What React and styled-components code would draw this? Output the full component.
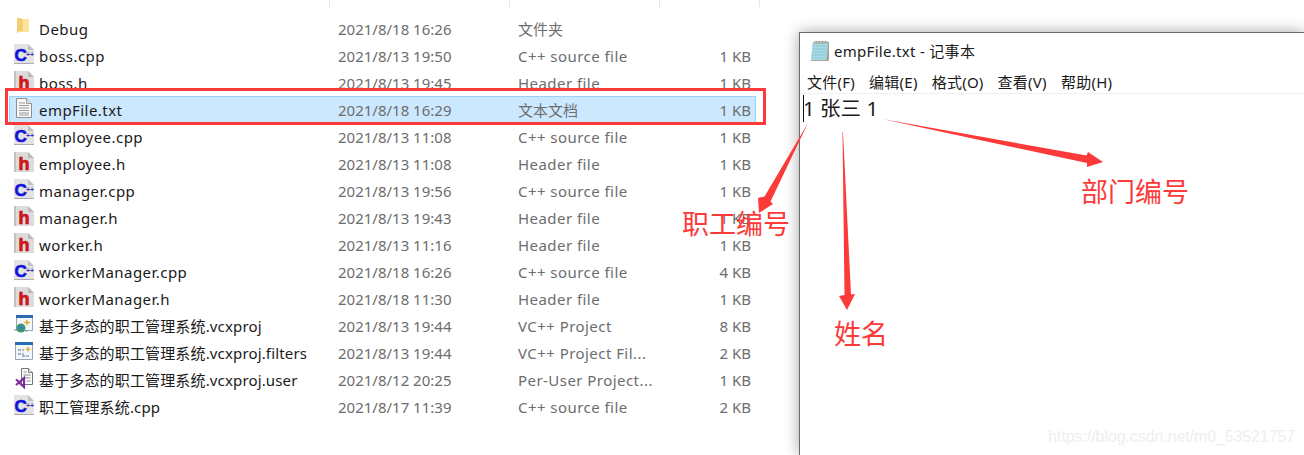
import React from "react"
import styled, { createGlobalStyle } from "styled-components"

const UI_FONT = `"Noto Sans", "Noto Sans CJK SC", sans-serif`
const LABEL_FONT = `"Noto Sans CJK SC", sans-serif`

const files = [
  { icon: "folder", name: "Debug", date: "2021/8/18 16:26", type: "文件夹", size: "" },
  { icon: "cpp", name: "boss.cpp", date: "2021/8/13 19:50", type: "C++ source file", size: "1 KB" },
  { icon: "h", name: "boss.h", date: "2021/8/13 19:45", type: "Header file", size: "1 KB" },
  { icon: "txt", name: "empFile.txt", date: "2021/8/18 16:29", type: "文本文档", size: "1 KB", selected: true },
  { icon: "cpp", name: "employee.cpp", date: "2021/8/13 11:08", type: "C++ source file", size: "1 KB" },
  { icon: "h", name: "employee.h", date: "2021/8/13 11:08", type: "Header file", size: "1 KB" },
  { icon: "cpp", name: "manager.cpp", date: "2021/8/13 19:56", type: "C++ source file", size: "1 KB" },
  { icon: "h", name: "manager.h", date: "2021/8/13 19:43", type: "Header file", size: "1 KB" },
  { icon: "h", name: "worker.h", date: "2021/8/13 11:16", type: "Header file", size: "1 KB" },
  { icon: "cpp", name: "workerManager.cpp", date: "2021/8/18 16:26", type: "C++ source file", size: "4 KB" },
  { icon: "h", name: "workerManager.h", date: "2021/8/18 11:30", type: "Header file", size: "1 KB" },
  { icon: "proj", name: "基于多态的职工管理系统.vcxproj", date: "2021/8/13 19:44", type: "VC++ Project", size: "8 KB" },
  { icon: "filters", name: "基于多态的职工管理系统.vcxproj.filters", date: "2021/8/13 19:44", type: "VC++ Project Fil...", size: "2 KB" },
  { icon: "user", name: "基于多态的职工管理系统.vcxproj.user", date: "2021/8/12 20:25", type: "Per-User Project...", size: "1 KB" },
  { icon: "cpp", name: "职工管理系统.cpp", date: "2021/8/17 11:39", type: "C++ source file", size: "2 KB" },
]

const menus = ["文件(F)", "编辑(E)", "格式(O)", "查看(V)", "帮助(H)"]

const hasCjk = (text) => /[\u4e00-\u9fff]/.test(text)

const FolderIcon = () => (
  <svg width="20" height="20" viewBox="0 0 20 20">
    <path d="M3 1h4l1 1v12l-5 2z" fill="#f3cf6f" />
    <path d="M8 2h7v13H3l5-1z" fill="#fde49a" />
    <path d="M8 2v12" stroke="#e8c465" />
  </svg>
)

const CppIcon = () => (
  <svg width="20" height="20" viewBox="0 0 20 20">
    <path d="M0 0h14l6 6v14H0z" fill="#e4e2e2" />
    <path d="M14 0v6h6z" fill="#c2c0c0" />
    <path d="M0 19h20v1H0z" fill="#aeacac" />
    <IconLetter x="0.500" y="16.500" fontSize="17" fill="#1212d8" stroke="#1212d8" strokeWidth="0.600">C</IconLetter>
    <IconLetter x="12" y="13" fontSize="7" fill="#3a3ac8">++</IconLetter>
  </svg>
)

const HeaderIcon = () => (
  <svg width="20" height="20" viewBox="0 0 20 20">
    <path d="M0 0h14l6 6v14H0z" fill="#dedbdb" />
    <path d="M14 0v6h6z" fill="#bdbaba" />
    <path d="M0 0h2v20H0z" fill="#c4c1c1" />
    <IconLetter x="4.500" y="18" fontSize="18" fill="#d81818" stroke="#c01010" strokeWidth="0.700">h</IconLetter>
  </svg>
)

const TxtIcon = () => (
  <svg width="16" height="20" viewBox="0 0 16 20">
    <path d="M.5.5h10l5 5v14H.5z" fill="#f8f8f8" stroke="#8f8f8f" />
    <path d="M10.500.5v5h5" fill="#e4e4e4" stroke="#9a9a9a" />
    <path d="M3 5h6M3 7.500h10M3 10h10M3 12.500h10M3 15h10M3 17h10" stroke="#9c9c9c" />
  </svg>
)

const ProjIcon = () => (
  <svg width="20" height="20" viewBox="0 0 20 20">
    <path d="M2.500 1.500h16v15h-16z" fill="#f4f7fb" stroke="#9aa5b5" />
    <path d="M2 1h17v3H2z" fill="#2b6cb0" />
    <path d="M13 5l1.200 2.600L17 8.500l-2.800 1L13 12l-1.200-2.500-2.800-1 2.800-.9z" fill="#e0b33c" />
    <circle cx="7" cy="14" r="4.500" fill="#3d9b6c" />
    <path d="M4 13.500c2-2 4-2 6 0-1 3-4 3.500-6 0z" fill="#3a7fc4" />
    <path d="M0 16h3M11 17h3" stroke="#8c8c8c" />
  </svg>
)

const FiltersIcon = () => (
  <svg width="20" height="20" viewBox="0 0 20 20">
    <path d="M1.500 1.500h17v17h-17z" fill="#f2f6fb" stroke="#9aa5b5" />
    <path d="M1 1h18v3H1z" fill="#2b6cb0" />
    <path d="M14 5l1 2.400 2.500.8-2.500.8-1 2.400-1-2.400-2.500-.8 2.500-.8z" fill="#e0b33c" />
    <path d="M4 8h3v2H4zM4 12h3v2H4zM8 14h3v2H8z" fill="#9fb2c6" />
    <path d="M8 9h2M8 13h2M12 15h3" stroke="#6c7c8c" />
  </svg>
)

const UserIcon = () => (
  <svg width="20" height="20" viewBox="0 0 20 20">
    <path d="M7.500.5h7l4 4v12h-11z" fill="#fbfbfb" stroke="#777" />
    <path d="M14.500.5v4h4" fill="#e6e6e6" stroke="#777" />
    <path d="M9.500 4h3M9.500 7h7M11 10h5.500M12.500 13h4" stroke="#8a8a8a" />
    <path d="M2 11.500l3 2.500M2 17l3-2.500 5-4.500v9l-5-4.500" fill="none" stroke="#7b2d9e" strokeWidth="2.200" />
  </svg>
)

const NotepadIcon = () => (
  <svg width="20" height="22" viewBox="0 0 20 22">
    <path d="M3 2h16v18l-1 1H1z" fill="#a9a28f" />
    <path d="M2.500 3h15.500l-1.500 17H1z" fill="#a8dbe6" />
    <path d="M3 6h14.500M2.800 9h14.500M2.600 12h14.500M2.300 15h14.500M2 18h14.500" stroke="#8cc6d6" />
    <path d="M4 1h14v2.500H4z" fill="#9a9a94" />
    <path d="M5 1v2M8 1v2M11 1v2M14 1v2M17 1v2" stroke="#e4e4de" />
  </svg>
)

const iconFor = {
  folder: FolderIcon,
  cpp: CppIcon,
  h: HeaderIcon,
  txt: TxtIcon,
  proj: ProjIcon,
  filters: FiltersIcon,
  user: UserIcon,
}

const App = () => {
  return (
    <Screen>
      <GlobalStyle />
      <Explorer>
        <ColumnHeads>
          <ColumnHead $width={330} />
          <ColumnHead $width={180} />
          <ColumnHead $width={150} />
          <ColumnHead $width={100} />
        </ColumnHeads>
        <FileList>
          {files.map((file) => {
            const Icon = iconFor[file.icon]
            return (
              <FileRow key={file.name} $selected={file.selected}>
                <IconSlot><Icon /></IconSlot>
                <FileName $cjk={hasCjk(file.name)}>{file.name}</FileName>
                <Detail>{file.date}</Detail>
                <TypeCell $cjk={hasCjk(file.type)}>{file.type}</TypeCell>
                <SizeCell>{file.size}</SizeCell>
              </FileRow>
            )
          })}
        </FileList>
      </Explorer>

      <Notepad>
        <TitleBar>
          <NotepadIcon />
          <TitleText>empFile.txt - 记事本</TitleText>
        </TitleBar>
        <MenuBar>
          {menus.map((menu) => <MenuItem key={menu}>{menu}</MenuItem>)}
        </MenuBar>
        <Editor>
          <Caret />
          <EditorText>1 张三 1</EditorText>
        </Editor>
        <Watermark>https://blog.csdn.net/m0_53521757</Watermark>
      </Notepad>

      <RowFrame />
      <Arrows viewBox="0 0 1304 455" width="1304" height="455">
        <path d="M808 123L770.500 201.500 773 204 759 213 758 198 764.500 196.500z" fill="#fc3a3a" />
        <path d="M843 132L842.500 132 844.500 295 839 296 847 310 855 294 851 294.500z" fill="#fc3a3a" />
        <path d="M882 119L1087 163 1087 167 1103 162 1088 152 1086.500 155.500z" fill="#fc3a3a" />
      </Arrows>
      <Callout $left={682} $top={205}>职工编号</Callout>
      <Callout $left={1081} $top={173}>部门编号</Callout>
      <Callout $left={834} $top={315}>姓名</Callout>
    </Screen>
  )
}

const GlobalStyle = createGlobalStyle`
  html, body {
    margin: 0;
    padding: 0;
    background: #fff;
  }
`

const Screen = styled.div`
  position: relative;
  display: flex;
  width: 1304px;
  height: 455px;
  overflow: hidden;
  background: #fff;
  font-family: ${UI_FONT};
`

const Explorer = styled.div`
  width: 799px;
  flex: none;
`

const ColumnHeads = styled.div`
  display: flex;
  height: 7px;
`

const ColumnHead = styled.div`
  width: ${(p) => p.$width}px;
  border-right: 1px solid #e5e5e5;
  box-sizing: border-box;
`

const FileList = styled.div`
  display: flex;
  flex-direction: column;
  padding: 8px 0 0 9px;
`

const FileRow = styled.div`
  display: grid;
  grid-template-columns: 30px 299px 180px 150px 83px;
  align-items: center;
  width: 747px;
  height: 27px;
  box-sizing: border-box;
  font-size: 15px;
  background: ${(p) => (p.$selected ? "#cce8ff" : "transparent")};
  outline: ${(p) => (p.$selected ? "1px solid #99d1ff" : "none")};
  outline-offset: -1px;
`

const IconSlot = styled.div`
  display: flex;
  align-items: center;
  justify-content: center;
  width: 20px;
  height: 20px;
  margin: 0 0 3px 5px;

  svg {
    overflow: visible;
  }
`

const IconLetter = styled.text`
  font-family: "Liberation Sans", sans-serif;
  font-weight: 700;
`

const FileName = styled.span`
  color: #1a1a1a;
  white-space: nowrap;
  letter-spacing: ${(p) => (p.$cjk ? "0.15px" : "0.45px")};
`

const Detail = styled.span`
  color: #6d6d6d;
  white-space: nowrap;
`

const TypeCell = styled(Detail)`
  letter-spacing: ${(p) => (p.$cjk ? "0" : "0.45px")};
`

const SizeCell = styled(Detail)`
  text-align: right;
`

const Notepad = styled.div`
  position: relative;
  display: flex;
  flex-direction: column;
  flex: 1;
  margin-top: 32px;
  border-left: 1px solid #6b6b6b;
  border-top: 1px solid #6b6b6b;
  background: #fff;
  box-shadow: 0 0 14px rgba(0, 0, 0, 0.35);
`

const TitleBar = styled.div`
  display: flex;
  align-items: center;
  gap: 4px;
  height: 35px;
  padding-left: 10px;
`

const TitleText = styled.span`
  font-size: 15px;
  letter-spacing: 0.3px;
  color: #1a1a1a;
`

const MenuBar = styled.div`
  display: flex;
  align-items: center;
  gap: 14px;
  height: 23px;
  padding: 2px 0 0 7px;
  border-bottom: 1px solid #f0f0f0;
  font-size: 15px;
  letter-spacing: 0.25px;
  color: #1a1a1a;
`

const MenuItem = styled.span`
  white-space: nowrap;
`

const Editor = styled.div`
  display: flex;
  align-items: flex-start;
  height: 30px;
  padding-left: 3px;
`

const Caret = styled.div`
  width: 1px;
  height: 27px;
  margin: 1px -1px 0 0;
  background: #111;
`

const EditorText = styled.span`
  font-size: 20.500px;
  line-height: 28px;
  color: #1a1a1a;
  white-space: pre;
`

const Watermark = styled.div`
  position: absolute;
  right: 9px;
  bottom: 9px;
  font-family: "Liberation Sans", sans-serif;
  font-size: 15.800px;
  color: #eeeeee;
  white-space: nowrap;
`

const RowFrame = styled.div`
  position: absolute;
  left: 5px;
  top: 88px;
  width: 761px;
  height: 37px;
  box-sizing: border-box;
  border: 3px solid #fc3a3a;
`

const Arrows = styled.svg`
  position: absolute;
  left: 0;
  top: 0;
  pointer-events: none;
`

const Callout = styled.div`
  position: absolute;
  left: ${(p) => p.$left}px;
  top: ${(p) => p.$top}px;
  font-family: ${LABEL_FONT};
  font-size: 27px;
  line-height: 36px;
  color: #fc3a3a;
  white-space: nowrap;
`

export default App
